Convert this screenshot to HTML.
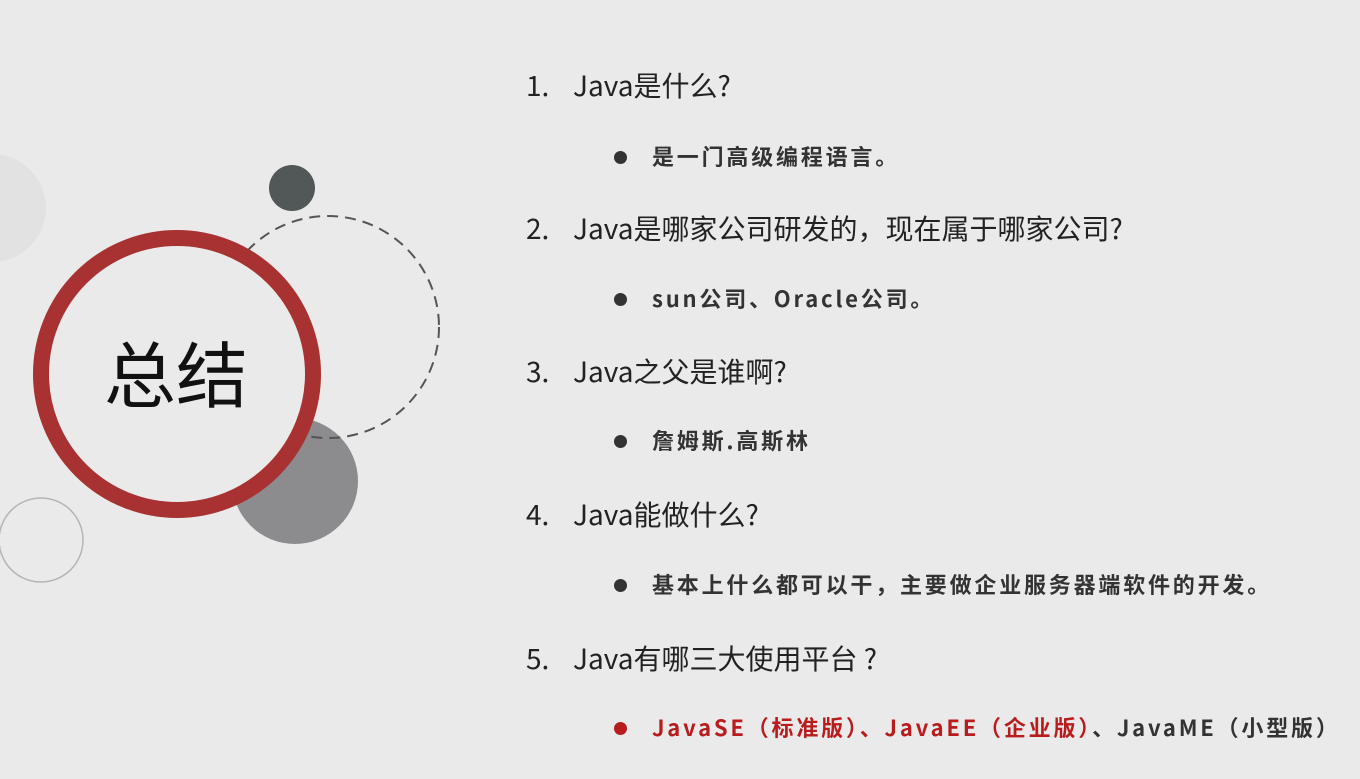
<!DOCTYPE html>
<html><head><meta charset="utf-8"><style>
body{margin:0;width:1360px;height:779px;background:#ebeaeb;position:relative;overflow:hidden;font-family:"Noto Sans CJK SC",sans-serif}
.h{position:absolute;left:526px;font-size:28px;color:#222;line-height:30px;white-space:nowrap}
.h span{display:inline-block;width:47px}
.b{position:absolute;left:652px;font-size:22px;letter-spacing:2.8px;font-weight:bold;color:#333;line-height:26px;white-space:nowrap}
.b:before{content:"";position:absolute;left:-38px;top:8px;width:13px;height:13px;border-radius:50%;background:#333}
.r{color:#b81d1d}
.r:before{background:#b81d1d}
</style></head><body>
<svg width="460" height="779" style="position:absolute;left:0;top:0">
<circle cx="-8" cy="208" r="54" fill="#e3e2e3"/>
<circle cx="292" cy="188" r="23" fill="#525857"/>
<circle cx="295" cy="481" r="63" fill="#8c8b8d"/>
<circle cx="328" cy="327" r="111" fill="none" stroke="#555" stroke-width="2" stroke-dasharray="11 7"/>
<circle cx="177" cy="374" r="136" fill="#ebeaeb" stroke="#a83232" stroke-width="16"/>
<circle cx="41" cy="540" r="42" fill="none" stroke="#b5b5b5" stroke-width="1.5"/>
<text x="176" y="402" font-size="72" text-anchor="middle" fill="#111" font-family="Noto Sans CJK SC,sans-serif">总结</text>
</svg>
<div class="h" style="top:70px"><span>1.</span>Java是什么?</div>
<div class="b" style="top:143px">是一门高级编程语言。</div>
<div class="h" style="top:213px"><span>2.</span>Java是哪家公司研发的，现在属于哪家公司?</div>
<div class="b" style="top:285px">sun公司、Oracle公司。</div>
<div class="h" style="top:356px"><span>3.</span>Java之父是谁啊?</div>
<div class="b" style="top:427px">詹姆斯.高斯林</div>
<div class="h" style="top:499px"><span>4.</span>Java能做什么?</div>
<div class="b" style="top:571px">基本上什么都可以干，主要做企业服务器端软件的开发。</div>
<div class="h" style="top:643px"><span>5.</span>Java有哪三大使用平台 ?</div>
<div class="b r" style="top:714px">JavaSE（标准版）、JavaEE（企业版）<span style="color:#333">、JavaME（小型版）</span></div>
</body></html>
